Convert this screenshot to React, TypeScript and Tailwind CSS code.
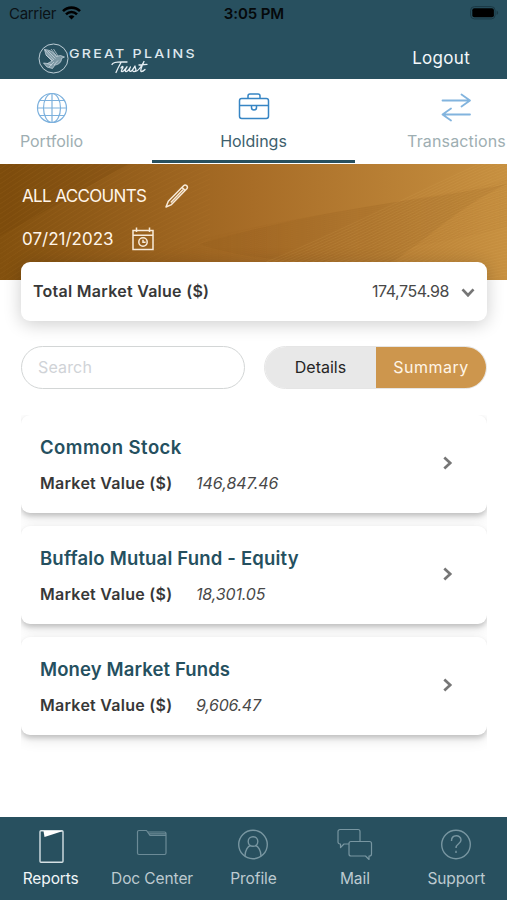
import type { ReactNode } from 'react'

interface Holding {
  name: string
  nameClass: string
  value: string
  valueClass: string
}

const HOLDINGS: Holding[] = [
  { name: 'Common Stock', nameClass: 'tracking-[0.45px]', value: '146,847.46', valueClass: 'tracking-[-0.02px]' },
  { name: 'Buffalo Mutual Fund - Equity', nameClass: 'tracking-[0.18px]', value: '18,301.05', valueClass: 'tracking-[-0.15px]' },
  { name: 'Money Market Funds', nameClass: 'tracking-[0.12px]', value: '9,606.47', valueClass: 'tracking-[-0.3px]' },
]

function StatusBar() {
  return (
    <div className="grid h-7 grid-cols-3 items-center pl-[9px] pr-[8px] text-[15px] text-[#0b1216]">
      <div className="flex items-center gap-1.5">
        <span className="leading-7 tracking-[-0.3px]">Carrier</span>
        <svg className="-mt-0.5" width="19" height="14" viewBox="0 0 19 14" fill="none" stroke="#000" strokeWidth="2.6">
          <path d="M1 5.2a12 12 0 0 1 17 0" />
          <path d="M4 8.3a7.8 7.8 0 0 1 11 0" />
          <path d="M6.5 10.6a4.3 4.3 0 0 1 6 0L9.5 13.6Z" fill="#000" stroke="none" />
        </svg>
      </div>
      <span className="text-center font-semibold tracking-[-0.1px] text-[#05090b]">3:05 PM</span>
      <svg className="-mt-0.5 justify-self-end" width="29" height="14" viewBox="0 0 29 14">
        <rect x="0.6" y="0.6" width="24.5" height="12.3" rx="3.8" fill="none" stroke="#1b3945" />
        <rect x="2.3" y="2.2" width="21.6" height="9" rx="2" fill="#000" />
        <path d="M26.6 4.5c2 .8 2 3.7 0 4.5Z" fill="#1b3945" />
      </svg>
    </div>
  )
}

function Logo() {
  return (
    <div className="flex items-start text-[#dde7ee]">
      <svg width="31" height="31" viewBox="0 0 31 31" fill="none" stroke="#cddae2" strokeWidth="0.9">
        <circle cx="15.5" cy="15.5" r="14.5" />
        <path d="M6.5 6.5C12 7 16 9 18 13.5L22.5 12.5L26.5 14L23.5 15.5C23.5 19 21 21.5 17 22L14.5 25.5L9 24L5.5 20L9.5 20.5L14 18L8 12Z" fill="#7d98a4" strokeWidth="0.7" />
        <path d="M13 6L19 13.5M15.5 6L20 13M6.5 6.5L16 17M8 12L15 18M10 8L17.5 15.5M9 20.5L14 22M16 22L20 17.5M11 24L16 19" strokeWidth="0.7" />
      </svg>
      <div className="flex w-[130px] flex-col">
        <span className="mt-[3px] origin-left scale-x-[1.18] whitespace-nowrap text-[12px] font-medium leading-[15px] tracking-[1.9px]">GREAT PLAINS</span>
        <svg className="-mt-px ml-[42px]" width="38" height="16" viewBox="0 0 38 16" fill="none" stroke="#e6eef3" strokeWidth="1.3" strokeLinecap="round" strokeLinejoin="round">
          <path d="M1 4.5C2 1.5 8 1.500 16 2M10 2.5C8 6 6.5 9 5 12.5M10 8C10.5 6.5 12 6 12 7C12 8 11 9 10.5 10.5C9.8 12 11.5 12 13 10.5L16 6.8C14.5 9 13.5 11.5 15 11.5C17 11.5 18.5 8.5 19.5 7C18 9.5 18 11.5 19.5 11.3C21.5 11 22.5 8.5 24 6C23.8 8 26 9.5 24.5 11C23.5 12 22 11.5 22 11M24.5 11.3C28 11 30.5 6 33 1.500C31 6 28.5 11.5 30.5 11.5C32 11.5 33 10.5 34 9.5M28 5L36 4.3" />
        </svg>
      </div>
    </div>
  )
}

function GlobeIcon() {
  return (
    <svg width="32" height="32" viewBox="0 0 32 32" fill="none" stroke="#7db1dd" strokeWidth="1.2">
      <circle cx="16" cy="16" r="14.5" />
      <ellipse cx="16" cy="16" rx="8.5" ry="14.5" />
      <path d="M16 1.5v29M1.5 16h29M4 8.5h24M4 23.5h24" />
    </svg>
  )
}

function BriefcaseIcon() {
  return (
    <svg width="32" height="32" viewBox="0 0 32 32" fill="none" stroke="#3685c4" strokeWidth="1.5" strokeLinejoin="round">
      <rect x="1.5" y="6.5" width="29" height="20" rx="2.2" />
      <path d="M10 6.500V4a2 2 0 0 1 2-2h8a2 2 0 0 1 2 2v2.500M1.500 13.500h29M13.500 13.500v2a2.500 2.500 0 0 0 5 0v-2" />
    </svg>
  )
}

function ArrowsIcon() {
  return (
    <svg width="32" height="32" viewBox="0 0 32 32" fill="none" stroke="#82b4de" strokeWidth="1.8" strokeLinejoin="round" strokeLinecap="round">
      <path d="M1.500 8.500h27M20.500 2.500l8.500 6-8.500 6M29 22.500H2M10 16.500l-8.500 6 8.500 6" />
    </svg>
  )
}

function Tab({ icon, label, className }: { icon: ReactNode; label: string; className: string }) {
  return (
    <div className={`flex h-[84px] flex-col items-center border-b-[3px] pt-[13px] ${className}`}>
      {icon}
      <span className="mt-[5px] whitespace-nowrap text-[16px] leading-6">{label}</span>
    </div>
  )
}

// Fine line texture behind the account selector
function BannerTexture() {
  const lines = Array.from({ length: 42 }, (_, i) => i)
  return (
    <svg className="absolute inset-0" width="507" height="116" viewBox="0 0 507 116" fill="none" strokeWidth="0.7">
      <path d="M0 72C50 45 90 20 130 0H0Z" fill="#6b3d05" opacity="0.2" />
      <path d="M200 80C330 42 430 36 507 20C460 42 440 65 390 100C330 100 250 98 200 80Z" fill="#875616" opacity="0.12" />
      {lines.map(i => (
        <path key={`l${i}`} d={`M0 ${i * 5 - 10}C60 ${i * 5 - 50} 120 ${i * 5 - 90} 210 ${i * 5 - 130}`} stroke="#c98a3c" opacity="0.14" />
      ))}
      {lines.map(i => (
        <path key={`r${i}`} d={`M${220 + i * 6} 116C${320 + i * 5} ${80 + i} 430 ${20 + i * 2.5} 507 ${i * 3 - 12}`} stroke="#e5b468" opacity="0.18" />
      ))}
      {lines.slice(0, 24).map(i => (
        <path key={`d${i}`} d={`M170 ${84 + i * 2}C300 ${48 + i * 2} 430 ${38 + i * 2} 507 ${16 + i * 2}`} stroke="#8a5718" opacity="0.1" />
      ))}
    </svg>
  )
}

function PencilIcon() {
  return (
    <svg className="-mt-[3px]" width="24" height="24" viewBox="0 0 24 24" fill="none" stroke="#f8ead8" strokeWidth="1.5" strokeLinejoin="round">
      <path d="M1 23L3.300 17.300 18.600 1.700c2-2 5 .8 3.200 3L6.500 20.600ZM17 3.400l3.200 3.200M18 5.800L5.800 18.400" />
    </svg>
  )
}

function CalendarIcon() {
  return (
    <svg className="-mt-[3px]" width="24" height="24" viewBox="0 0 24 24" fill="none" stroke="#f8ead8" strokeWidth="1.5">
      <path d="M2 3.500h20v19H2ZM2 8.300h20M5.500.5v4.500M18.500.5v4.500" />
      <circle cx="12" cy="15" r="4.2" />
      <path d="M12 12.800v2.400h2.600" />
    </svg>
  )
}

function Chevron({ className }: { className?: string }) {
  return (
    <svg className={className} width="12" height="14" viewBox="0 0 12 14" fill="none" stroke="#767676" strokeWidth="2.7">
      <path d="M2.300 1.500L8.200 7l-5.900 5.500" />
    </svg>
  )
}

function HoldingCard({ holding }: { holding: Holding }) {
  return (
    <div className="flex h-[98.5px] items-center justify-between rounded-[9px] bg-white pl-[19px] pr-[33px] shadow-[0_3px_5px_rgba(0,0,0,0.18),0_5px_14px_rgba(0,0,0,0.1)]">
      <div className="pt-px">
        <h2 className={`mt-px whitespace-nowrap text-[18.5px] font-semibold leading-7 text-[#25505f] ${holding.nameClass}`}>{holding.name}</h2>
        <div className="mt-2 flex leading-7">
          <span className="w-[156px] whitespace-nowrap text-[16px] font-semibold tracking-[0.27px] text-[#383838]">Market Value ($)</span>
          <span className={`text-[16px] italic text-[#484848] ${holding.valueClass}`}>{holding.value}</span>
        </div>
      </div>
      <Chevron className="-mt-px" />
    </div>
  )
}

function NavItem({ icon, label, className }: { icon: ReactNode; label: string; className: string }) {
  return (
    <div className={`flex flex-col items-center pt-[10px] ${className}`}>
      {icon}
      <span className="mt-0.5 whitespace-nowrap text-[15.5px] leading-6 tracking-[-0.1px]">{label}</span>
    </div>
  )
}

export default function App() {
  return (
    <div className="flex h-[900px] w-[507px] flex-col overflow-hidden bg-white font-['Inter',sans-serif]">
      <header className="h-[79px] shrink-0 bg-[#28505f]">
        <StatusBar />
        <div className="flex justify-between pl-[38px] pr-[37px] pt-[15px]">
          <Logo />
          <span className="mt-px text-[17px] leading-7 tracking-[0.3px] text-[#f4f8fa]">Logout</span>
        </div>
      </header>

      <nav className="grid h-[85px] shrink-0 grid-cols-[152px_203px_203px]">
        <Tab icon={<GlobeIcon />} label="Portfolio" className="-ml-[49px] border-transparent text-[#9eaeb2]" />
        <Tab icon={<BriefcaseIcon />} label="Holdings" className="border-[#28505f] text-[#3d606d]" />
        <Tab icon={<ArrowsIcon />} label="Transactions" className="border-transparent tracking-[0.15px] text-[#9eaeb2]" />
      </nav>

      <section className="relative h-[116px] shrink-0 bg-linear-to-r from-[#82500e] via-[#a86d27] to-[#c79040] text-[#fff5e9]">
        <BannerTexture />
        <div className="relative flex flex-col pl-[22px] pt-[19px]">
          <div className="flex h-7 items-center gap-[19px]">
            <span className="text-[17px] tracking-[-0.65px]">ALL ACCOUNTS</span>
            <PencilIcon />
          </div>
          <div className="mt-[15px] flex h-7 items-center gap-[17px]">
            <span className="text-[17px]">07/21/2023</span>
            <CalendarIcon />
          </div>
        </div>
      </section>

      <main className="relative -mt-[18px] flex-1 pl-[21px] pr-5">
        <div className="flex h-[58.5px] items-center justify-between rounded-[9px] bg-white pl-3 pr-[13px] shadow-[0_3px_18px_rgba(0,0,0,0.2)]">
          <span className="text-[16px] font-semibold tracking-[0.27px] text-[#383838]">Total Market Value ($)</span>
          <div className="flex items-center gap-[13px]">
            <span className="text-[16px] tracking-[-0.45px] text-[#484848]">174,754.98</span>
            <Chevron className="mt-[3px] rotate-90" />
          </div>
        </div>

        <div className="mt-[25px] flex justify-between">
          <input
            placeholder="Search"
            className="h-[43px] w-[224px] rounded-full border-[1.5px] border-[#d3d6d6] px-4 text-[16px] tracking-[0.15px] outline-none placeholder:text-[#d0d3d7]"
          />
          <div className="flex h-[43px] w-[223px] overflow-hidden rounded-full border border-[#e5e5e5] text-[16px]">
            <button type="button" className="w-[111px] bg-[#e8e8e8] text-[#252525]">Details</button>
            <button type="button" className="flex-1 bg-[#cd964d] tracking-[0.5px] text-[#fff5e6]">Summary</button>
          </div>
        </div>

        <div className="mt-[26px] flex flex-col gap-[12.5px] overflow-hidden pb-5">
          {HOLDINGS.map(h => <HoldingCard key={h.name} holding={h} />)}
        </div>
      </main>

      <footer className="grid h-[83px] shrink-0 grid-cols-5 bg-[#28505f]">
        <NavItem
          label="Reports"
          className="text-[#f2f6f8]"
          icon={
            <svg width="32" height="38" viewBox="0 0 32 38" fill="none" stroke="#d5e0e4" strokeWidth="1.4">
              <rect x="5" y="3.7" width="23" height="31.5" rx="1" />
              <path d="M8.500 4H28L9.500 10Z" fill="#fff" stroke="none" />
            </svg>
          }
        />
        <NavItem
          label="Doc Center"
          className="text-[#bdcad0]"
          icon={
            <svg width="32" height="38" viewBox="0 0 32 38" fill="none" stroke="#6c8b97" strokeWidth="1.2" strokeLinejoin="round">
              <path d="M1.500 5a1.500 1.500 0 0 1 1.500-1.500h7.500l3.500 5h16v17.500a1.500 1.500 0 0 1-1.500 1.500h-25.500a1.500 1.500 0 0 1-1.500-1.500ZM11.500 5h17a1.500 1.500 0 0 1 1.500 1.500v2M12.500 6.800h17" />
            </svg>
          }
        />
        <NavItem
          label="Profile"
          className="text-[#bdcad0]"
          icon={
            <svg width="32" height="38" viewBox="0 0 32 38" fill="none" stroke="#7896a1" strokeWidth="1.4">
              <circle cx="16" cy="17.5" r="14.3" />
              <circle cx="16" cy="14.5" r="4.8" />
              <path d="M8 29c0-6 3-9.700 5.500-10.500M24 29c0-6-3-9.700-5.500-10.500" />
            </svg>
          }
        />
        <NavItem
          label="Mail"
          className="text-[#bdcad0]"
          icon={
            <svg width="36" height="38" viewBox="0 0 36 38" fill="none" stroke="#7896a1" strokeWidth="1.2" strokeLinejoin="round">
              <path d="M12 17H7l-3.500 3.500V17H3a2 2 0 0 1-2-2V4.500a2 2 0 0 1 2-2h18a2 2 0 0 1 2 2V14" />
              <path d="M14 14.500h18.500a2 2 0 0 1 2 2V27a2 2 0 0 1-2 2h-.5v3.500L28.500 29H14a2 2 0 0 1-2-2V16.500a2 2 0 0 1 2-2Z" />
            </svg>
          }
        />
        <NavItem
          label="Support"
          className="text-[#bdcad0]"
          icon={
            <svg width="32" height="38" viewBox="0 0 32 38" fill="none" stroke="#7896a1" strokeWidth="1.4">
              <circle cx="16" cy="17.5" r="14.3" />
              <path d="M11.500 14c0-7 9.500-6.500 9.500-1 0 4-5 3.500-5 8M16 23.800v2.200" />
            </svg>
          }
        />
      </footer>
    </div>
  )
}
